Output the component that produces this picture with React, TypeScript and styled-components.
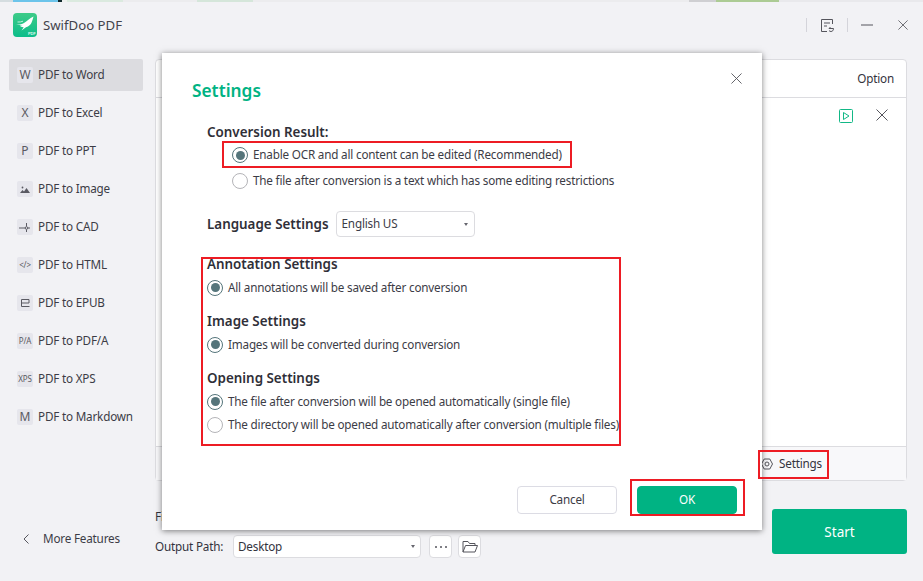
import React from "react";
import styled, { createGlobalStyle } from "styled-components";

const Global = createGlobalStyle`
  html, body { margin: 0; padding: 0; background: #f2f2f5; }
  * { box-sizing: border-box; }
`;

const Window = styled.div`
  position: relative;
  width: 923px;
  height: 581px;
  overflow: hidden;
  background: #f2f2f5;
  color: #33333d;
  font-family: "Noto Sans", "Open Sans", sans-serif;
  font-size: 11.7px;
  letter-spacing: -0.19px;
  display: flex;
  flex-direction: column;
`;

const Txt = styled.span`
  padding-bottom: 2px;
`;

const TopStrip = styled.div`
  display: flex;
  height: 2px;
  flex: none;
  background: #e9e9ec;
`;
const StripPart = styled.div<{ $w: number; $c: string }>`
  width: ${(p) => p.$w}px;
  background: ${(p) => p.$c};
`;

const TitleBar = styled.header`
  flex: none;
  height: 57px;
  display: flex;
  align-items: flex-start;
  padding: 11px 3px 0 13px;
`;
const Brand = styled.div`
  display: flex;
  align-items: center;
  height: 24px;
`;
const LogoText = styled.span`
  margin-left: 6px;
  font-size: 13.2px;
  letter-spacing: 0;
  color: #44444c;
`;
const TitleActions = styled.div`
  margin-left: auto;
  height: 24px;
  display: flex;
  align-items: center;
  color: #55555c;
`;
const Divider = styled.span`
  width: 1px;
  height: 14px;
  background: #d4d4da;
`;
const TitleBtn = styled.span<{ $w: number }>`
  width: ${(p) => p.$w}px;
  display: flex;
  align-items: center;
  justify-content: center;
`;

const Body = styled.div`
  flex: 1;
  display: flex;
  min-height: 0;
`;

const Sidebar = styled.nav`
  flex: none;
  width: 155px;
  padding: 0 12px 0 9px;
  display: flex;
  flex-direction: column;
  gap: 6px;
`;
const NavItem = styled.div<{ $active?: boolean }>`
  height: 32px;
  display: flex;
  align-items: center;
  padding-left: 8px;
  gap: 5px;
  border-radius: 2px;
  background: ${(p) => (p.$active ? "#dcdce0" : "transparent")};
  color: #3c3c46;
`;
const NavBadge = styled.span`
  width: 16px;
  height: 16px;
  flex: none;
  border-radius: 2px;
  background: #e6e6ec;
  color: #5a5a62;
  display: flex;
  align-items: center;
  justify-content: center;
  font-size: 12px;
  letter-spacing: 0;
  line-height: 16px;
`;
const TinyBadge = styled(NavBadge)`
  font-size: 8px;
  letter-spacing: -0.2px;
`;
const MoreFeatures = styled.div`
  margin-top: auto;
  margin-bottom: 33px;
  padding-left: 14px;
  display: flex;
  align-items: center;
  gap: 14px;
  color: #3c3c46;
`;

const Main = styled.main`
  flex: 1;
  display: flex;
  flex-direction: column;
  padding-right: 16px;
`;
const Panel = styled.section`
  height: 422px;
  flex: none;
  border: 1px solid #dcdce0;
  border-radius: 4px;
  background: #fff;
  display: flex;
  flex-direction: column;
`;
const PanelHead = styled.div`
  height: 38px;
  flex: none;
  border-bottom: 1px solid #dcdce0;
  display: flex;
  align-items: center;
  justify-content: flex-end;
  padding-right: 12px;
`;
const PanelRow = styled.div`
  flex: 1;
  display: flex;
  justify-content: flex-end;
  align-items: flex-start;
  gap: 23px;
  padding: 11px 18px 0 0;
`;
const PanelFoot = styled.div`
  height: 34px;
  flex: none;
  background: #f8f8fa;
  border-top: 1px solid #dcdce0;
  display: flex;
  align-items: center;
  padding-left: 605px;
  gap: 6px;
`;

const BottomArea = styled.div`
  flex: 1;
  display: flex;
  justify-content: space-between;
  padding-top: 26px;
`;
const PathColumn = styled.div`
  display: flex;
  flex-direction: column;
  gap: 10px;
`;
const HiddenLabel = styled.div`
  line-height: 18px;
`;
const PathRow = styled.div`
  display: flex;
  align-items: center;
`;
const PathLabel = styled(Txt)`
  width: 78px;
`;
const PathSelect = styled.div`
  width: 188px;
  height: 23px;
  border: 1px solid #dcdce0;
  border-radius: 4px;
  background: #fff;
  padding: 0 5px 0 4px;
  display: flex;
  align-items: center;
  justify-content: space-between;
`;
const SquareBtn = styled.div`
  width: 23px;
  height: 23px;
  margin-left: 8px;
  border: 1px solid #dcdce0;
  border-radius: 4px;
  background: #fff;
  display: flex;
  align-items: center;
  justify-content: center;
`;
const NextBtn = styled(SquareBtn)`
  margin-left: 6px;
`;
const StartBtn = styled.div`
  width: 135px;
  height: 45px;
  margin-top: 2px;
  border-radius: 3px;
  background: #00b383;
  color: #fff;
  font-size: 13.5px;
  letter-spacing: 0;
  display: flex;
  align-items: center;
  justify-content: center;
`;

const Caret = styled.span`
  width: 0;
  height: 0;
  border-left: 2.5px solid transparent;
  border-right: 2.5px solid transparent;
  border-top: 3px solid #66666e;
`;

const Dialog = styled.div`
  position: absolute;
  left: 162px;
  top: 53px;
  width: 600px;
  height: 477px;
  background: #fff;
  box-shadow: 0 1px 6px rgba(0, 0, 0, 0.5);
  padding: 26px 25px 16px 30px;
  display: flex;
  flex-direction: column;
`;
const DialogClose = styled.span`
  position: absolute;
  right: 20px;
  top: 20px;
  display: flex;
  color: #55555c;
`;
const DialogTitle = styled.h2`
  margin: 0 0 20px;
  font-size: 17.3px;
  letter-spacing: 0;
  line-height: 24px;
  font-weight: 600;
  color: #00b383;
`;
const Form = styled.div`
  padding-left: 15px;
  flex: 1;
  display: flex;
  flex-direction: column;
`;
const GroupTitle = styled.div`
  font-size: 13.4px;
  letter-spacing: 0;
  line-height: 18px;
  font-weight: 600;
  color: #2f2f38;
`;
const OptionStack = styled.div<{ $indent?: boolean }>`
  display: flex;
  flex-direction: column;
  padding-left: ${(p) => (p.$indent ? 25 : 0)}px;
  margin-top: ${(p) => (p.$indent ? 1 : 3)}px;
`;
const OptionRow = styled.div<{ $roomy?: boolean }>`
  height: ${(p) => (p.$roomy ? 26 : 23)}px;
  display: flex;
  align-items: center;
  gap: 5px;
  color: #3c3c46;
  white-space: nowrap;
`;
const Radio = styled.span<{ $on?: boolean }>`
  width: 16px;
  height: 16px;
  flex: none;
  border-radius: 50%;
  border: 1.5px solid ${(p) => (p.$on ? "#55757b" : "#b4b4b8")};
  display: flex;
  align-items: center;
  justify-content: center;
  &::after {
    content: "";
    width: 9px;
    height: 9px;
    border-radius: 50%;
    background: ${(p) => (p.$on ? "#55757b" : "transparent")};
  }
`;
const LangRow = styled.div`
  display: flex;
  align-items: center;
  gap: 7px;
  margin-top: 17px;
  margin-bottom: 18px;
`;
const LangSelect = styled.div`
  width: 139px;
  height: 26px;
  border: 1px solid #dcdce0;
  border-radius: 4px;
  padding: 0 6px 0 5px;
  display: flex;
  align-items: center;
  justify-content: space-between;
  color: #3c3c46;
`;
const SectionGap = styled.div`
  height: 13px;
  flex: none;
`;
const DialogFooter = styled.div`
  display: flex;
  justify-content: flex-end;
  gap: 20px;
`;
const DialogBtn = styled.div<{ $primary?: boolean }>`
  width: 100px;
  height: 28px;
  border-radius: 4px;
  border: 1px solid ${(p) => (p.$primary ? "#00b383" : "#dcdce4")};
  background: ${(p) => (p.$primary ? "#00b383" : "#fff")};
  color: ${(p) => (p.$primary ? "#fff" : "#3c3c46")};
  display: flex;
  align-items: center;
  justify-content: center;
`;

const RedMark = styled.div<{ $l: number; $t: number; $w: number; $h: number }>`
  position: absolute;
  left: ${(p) => p.$l}px;
  top: ${(p) => p.$t}px;
  width: ${(p) => p.$w}px;
  height: ${(p) => p.$h}px;
  border: 2px solid #ed1c24;
  pointer-events: none;
`;

const X = ({ s = 12, c = "currentColor" }: { s?: number; c?: string }) => (
  <svg width={s} height={s} viewBox="0 0 12 12" fill="none" stroke={c} strokeWidth="1">
    <path d="M.5.5l11 11M11.5.5l-11 11" />
  </svg>
);

const Logo = () => (
  <svg width="24" height="24" viewBox="0 0 24 24">
    <defs>
      <linearGradient id="lg" x1="0" y1="0" x2="0" y2="1">
        <stop offset="0" stopColor="#3ecb88" />
        <stop offset="1" stopColor="#0cbd8a" />
      </linearGradient>
    </defs>
    <rect width="24" height="24" rx="4" fill="url(#lg)" />
    <path
      d="M3 11.500c3 .4 5.500-.2 8-1.500C14 8.300 16.500 5.500 20.500 3.500c-.6 2-1 3.800-1.800 5.800-.9 2.300-2.800 4.200-5.700 5l-4.500 3.200 2.200-3.300c-1.600.1-3-.4-4-1.400l3-.5-3.500-.3L3 11.500z"
      fill="#fff"
    />
    <path d="M4.500 9c2 .2 3.800-.1 5.500-.8" stroke="#fff" strokeWidth=".7" fill="none" />
    <text x="15" y="21.500" fontSize="4" fontWeight="700" fill="#d8f5ea" fontFamily="Liberation Sans, sans-serif">PDF</text>
  </svg>
);

const navIcon = (content: React.ReactNode) => <NavBadge>{content}</NavBadge>;

export default function App() {
  return (
    <Window>
      <Global />
      <TopStrip>
        <StripPart $w={13} $c="#d5dde0" />
        <StripPart $w={45} $c="#6cc4ea" />
        <StripPart $w={4} $c="#10282c" />
        <StripPart $w={5} $c="#eef0ee" />
        <StripPart $w={56} $c="#dbeadf" />
        <StripPart $w={74} $c="#ececee" />
        <StripPart $w={56} $c="#d5e6da" />
        <StripPart $w={436} $c="#ececee" />
        <StripPart $w={27} $c="#cfcfd2" />
        <StripPart $w={63} $c="#accb94" />
      </TopStrip>
      <TitleBar>
        <Brand>
          <Logo />
          <LogoText>SwifDoo PDF</LogoText>
        </Brand>
        <TitleActions>
          <Divider />
          <TitleBtn $w={40}>
            <svg width="15" height="15" viewBox="0 0 15 15" fill="none" stroke="#55555c">
              <path d="M7 13.500H1.500v-12h11V6M4 5h6M4 8h3" />
              <path d="M9 10.500h4.500M13.500 10.500c0 2-1.200 3-2.500 3-.8 0-1.500-.3-2-1M9 10.500l1.500-1.500" />
            </svg>
          </TitleBtn>
          <Divider />
          <TitleBtn $w={38}>
            <svg width="12" height="2" viewBox="0 0 12 2"><path d="M0 1h12" stroke="#55555c" /></svg>
          </TitleBtn>
          <TitleBtn $w={34}>
            <X s={10} />
          </TitleBtn>
        </TitleActions>
      </TitleBar>
      <Body>
        <Sidebar>
          <NavItem $active>{navIcon("W")}<Txt>PDF to Word</Txt></NavItem>
          <NavItem>{navIcon("X")}<Txt>PDF to Excel</Txt></NavItem>
          <NavItem>{navIcon("P")}<Txt>PDF to PPT</Txt></NavItem>
          <NavItem>
            {navIcon(
              <svg width="10" height="8" viewBox="0 0 10 8" fill="#5a5a62">
                <circle cx="2.500" cy="2.500" r=".9" />
                <path d="M0 8l2.500-3L4 6.500 6.500 3 10 8z" />
              </svg>
            )}
            <Txt>PDF to Image</Txt>
          </NavItem>
          <NavItem>
            {navIcon(
              <svg width="12" height="11" viewBox="0 0 12 11" fill="none" stroke="#5a5a62">
                <path d="M0 6h6M9 6h2M7.500 1v3.500M7.500 7.500V10" />
                <circle cx="7.500" cy="6" r="1.300" />
              </svg>
            )}
            <Txt>PDF to CAD</Txt>
          </NavItem>
          <NavItem><TinyBadge>&lt;/&gt;</TinyBadge><Txt>PDF to HTML</Txt></NavItem>
          <NavItem>
            {navIcon(
              <svg width="9" height="8" viewBox="0 0 9 8" fill="none" stroke="#5a5a62">
                <path d="M8.500 7.500H.5v-7h7.500v3.500H.5" />
              </svg>
            )}
            <Txt>PDF to EPUB</Txt>
          </NavItem>
          <NavItem><TinyBadge>P/A</TinyBadge><Txt>PDF to PDF/A</Txt></NavItem>
          <NavItem><TinyBadge>XPS</TinyBadge><Txt>PDF to XPS</Txt></NavItem>
          <NavItem>{navIcon("M")}<Txt>PDF to Markdown</Txt></NavItem>
          <MoreFeatures>
            <svg width="6" height="10" viewBox="0 0 6 10" fill="none" stroke="#55555c">
              <path d="M5.500.5L1 5l4.500 4.500" />
            </svg>
            <Txt>More Features</Txt>
          </MoreFeatures>
        </Sidebar>
        <Main>
          <Panel>
            <PanelHead><Txt>Option</Txt></PanelHead>
            <PanelRow>
              <svg width="14" height="14" viewBox="0 0 14 14" fill="none" stroke="#12b886" strokeWidth="1">
                <rect x=".5" y=".5" width="13" height="13" rx="1" />
                <path d="M4.500 3.500v7L10 7z" />
              </svg>
              <X s={12} c="#55555c" />
            </PanelRow>
            <PanelFoot>
              <svg width="12" height="12" viewBox="0 0 12 12" fill="none" stroke="#55555c">
                <path d="M3.200 1h5.600L11.500 6 8.800 11H3.200L.5 6z" />
                <circle cx="6" cy="6" r="2" />
              </svg>
              <Txt>Settings</Txt>
            </PanelFoot>
          </Panel>
          <BottomArea>
            <PathColumn>
              <HiddenLabel>File</HiddenLabel>
              <PathRow>
                <PathLabel>Output Path:</PathLabel>
                <PathSelect><Txt>Desktop</Txt><Caret /></PathSelect>
                <SquareBtn>
                  <svg width="12" height="2" viewBox="0 0 12 2" fill="#55555c">
                    <circle cx="1" cy="1" r="1" /><circle cx="6" cy="1" r="1" /><circle cx="11" cy="1" r="1" />
                  </svg>
                </SquareBtn>
                <NextBtn>
                  <svg width="16" height="13" viewBox="0 0 16 13" fill="none" stroke="#55555c">
                    <path d="M1 12V1.500h5L7.500 3.500H13v2M1 12l2.500-6.500H15.500L13 12z" />
                  </svg>
                </NextBtn>
              </PathRow>
            </PathColumn>
            <StartBtn>Start</StartBtn>
          </BottomArea>
        </Main>
      </Body>

      <Dialog>
        <DialogClose><X s={11} /></DialogClose>
        <DialogTitle>Settings</DialogTitle>
        <Form>
          <GroupTitle>Conversion Result:</GroupTitle>
          <OptionStack $indent>
            <OptionRow $roomy><Radio $on /><Txt>Enable OCR and all content can be edited (Recommended)</Txt></OptionRow>
            <OptionRow $roomy><Radio /><Txt>The file after conversion is a text which has some editing restrictions</Txt></OptionRow>
          </OptionStack>
          <LangRow>
            <GroupTitle>Language Settings</GroupTitle>
            <LangSelect><Txt>English US</Txt><Caret /></LangSelect>
          </LangRow>
          <GroupTitle>Annotation Settings</GroupTitle>
          <OptionStack>
            <OptionRow><Radio $on /><Txt>All annotations will be saved after conversion</Txt></OptionRow>
          </OptionStack>
          <SectionGap />
          <GroupTitle>Image Settings</GroupTitle>
          <OptionStack>
            <OptionRow><Radio $on /><Txt>Images will be converted during conversion</Txt></OptionRow>
          </OptionStack>
          <SectionGap />
          <GroupTitle>Opening Settings</GroupTitle>
          <OptionStack>
            <OptionRow><Radio $on /><Txt>The file after conversion will be opened automatically (single file)</Txt></OptionRow>
            <OptionRow><Radio /><Txt>The directory will be opened automatically after conversion (multiple files)</Txt></OptionRow>
          </OptionStack>
        </Form>
        <DialogFooter>
          <DialogBtn><Txt>Cancel</Txt></DialogBtn>
          <DialogBtn $primary><Txt>OK</Txt></DialogBtn>
        </DialogFooter>
      </Dialog>

      <RedMark $l={222} $t={141} $w={350} $h={27} />
      <RedMark $l={201} $t={257} $w={420} $h={189} />
      <RedMark $l={758} $t={450} $w={71} $h={29} />
      <RedMark $l={630} $t={479} $w={115} $h={37} />
    </Window>
  );
}
